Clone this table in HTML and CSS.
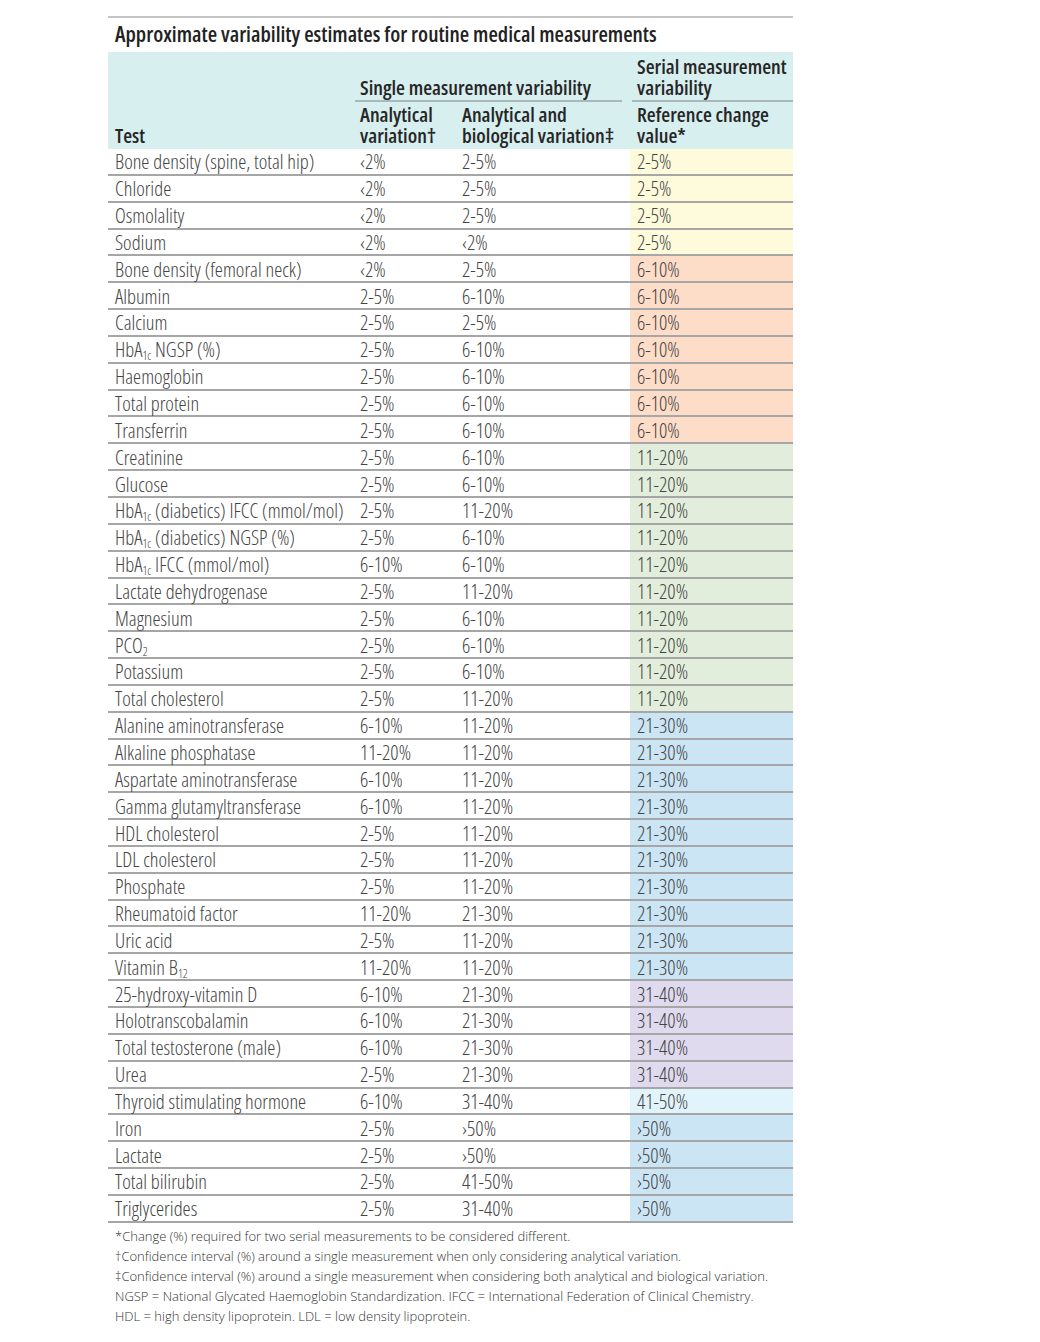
FILE: index.html
```html
<!DOCTYPE html>
<html>
<head>
<meta charset="utf-8">
<link rel="stylesheet" href="styles.css">
</head>
<body>
<div class="figure">
  <div class="title">Approximate variability estimates for routine medical measurements</div>
  <table class="vt">
    <colgroup>
      <col class="c1"><col class="c2"><col class="c3"><col class="c4">
    </colgroup>
    <thead>
      <tr class="h1">
        <th></th>
        <th colspan="2" class="grp"><div class="uline">Single measurement variability</div></th>
        <th class="grp4"><div class="uline">Serial measurement variability</div></th>
      </tr>
      <tr class="h2">
        <th class="t1">Test</th>
        <th>Analytical variation†</th>
        <th>Analytical and biological variation‡</th>
        <th class="t4">Reference change value*</th>
      </tr>
    </thead>
    <tbody>
      <tr><td>Bone density (spine, total hip)</td><td>‹2%</td><td>2-5%</td><td class="y">2-5%</td></tr>
      <tr><td>Chloride</td><td>‹2%</td><td>2-5%</td><td class="y">2-5%</td></tr>
      <tr><td>Osmolality</td><td>‹2%</td><td>2-5%</td><td class="y">2-5%</td></tr>
      <tr><td>Sodium</td><td>‹2%</td><td>‹2%</td><td class="y">2-5%</td></tr>
      <tr><td>Bone density (femoral neck)</td><td>‹2%</td><td>2-5%</td><td class="o">6-10%</td></tr>
      <tr><td>Albumin</td><td>2-5%</td><td>6-10%</td><td class="o">6-10%</td></tr>
      <tr><td>Calcium</td><td>2-5%</td><td>2-5%</td><td class="o">6-10%</td></tr>
      <tr><td>HbA<sub>1c</sub> NGSP (%)</td><td>2-5%</td><td>6-10%</td><td class="o">6-10%</td></tr>
      <tr><td>Haemoglobin</td><td>2-5%</td><td>6-10%</td><td class="o">6-10%</td></tr>
      <tr><td>Total protein</td><td>2-5%</td><td>6-10%</td><td class="o">6-10%</td></tr>
      <tr><td>Transferrin</td><td>2-5%</td><td>6-10%</td><td class="o">6-10%</td></tr>
      <tr><td>Creatinine</td><td>2-5%</td><td>6-10%</td><td class="g">11-20%</td></tr>
      <tr><td>Glucose</td><td>2-5%</td><td>6-10%</td><td class="g">11-20%</td></tr>
      <tr><td>HbA<sub>1c</sub> (diabetics) IFCC (mmol/mol)</td><td>2-5%</td><td>11-20%</td><td class="g">11-20%</td></tr>
      <tr><td>HbA<sub>1c</sub> (diabetics) NGSP (%)</td><td>2-5%</td><td>6-10%</td><td class="g">11-20%</td></tr>
      <tr><td>HbA<sub>1c</sub> IFCC (mmol/mol)</td><td>6-10%</td><td>6-10%</td><td class="g">11-20%</td></tr>
      <tr><td>Lactate dehydrogenase</td><td>2-5%</td><td>11-20%</td><td class="g">11-20%</td></tr>
      <tr><td>Magnesium</td><td>2-5%</td><td>6-10%</td><td class="g">11-20%</td></tr>
      <tr><td>PCO<sub>2</sub></td><td>2-5%</td><td>6-10%</td><td class="g">11-20%</td></tr>
      <tr><td>Potassium</td><td>2-5%</td><td>6-10%</td><td class="g">11-20%</td></tr>
      <tr><td>Total cholesterol</td><td>2-5%</td><td>11-20%</td><td class="g">11-20%</td></tr>
      <tr><td>Alanine aminotransferase</td><td>6-10%</td><td>11-20%</td><td class="b">21-30%</td></tr>
      <tr><td>Alkaline phosphatase</td><td>11-20%</td><td>11-20%</td><td class="b">21-30%</td></tr>
      <tr><td>Aspartate aminotransferase</td><td>6-10%</td><td>11-20%</td><td class="b">21-30%</td></tr>
      <tr><td>Gamma glutamyltransferase</td><td>6-10%</td><td>11-20%</td><td class="b">21-30%</td></tr>
      <tr><td>HDL cholesterol</td><td>2-5%</td><td>11-20%</td><td class="b">21-30%</td></tr>
      <tr><td>LDL cholesterol</td><td>2-5%</td><td>11-20%</td><td class="b">21-30%</td></tr>
      <tr><td>Phosphate</td><td>2-5%</td><td>11-20%</td><td class="b">21-30%</td></tr>
      <tr><td>Rheumatoid factor</td><td>11-20%</td><td>21-30%</td><td class="b">21-30%</td></tr>
      <tr><td>Uric acid</td><td>2-5%</td><td>11-20%</td><td class="b">21-30%</td></tr>
      <tr><td>Vitamin B<sub>12</sub></td><td>11-20%</td><td>11-20%</td><td class="b">21-30%</td></tr>
      <tr><td>25-hydroxy-vitamin D</td><td>6-10%</td><td>21-30%</td><td class="p">31-40%</td></tr>
      <tr><td>Holotranscobalamin</td><td>6-10%</td><td>21-30%</td><td class="p">31-40%</td></tr>
      <tr><td>Total testosterone (male)</td><td>6-10%</td><td>21-30%</td><td class="p">31-40%</td></tr>
      <tr><td>Urea</td><td>2-5%</td><td>21-30%</td><td class="p">31-40%</td></tr>
      <tr><td>Thyroid stimulating hormone</td><td>6-10%</td><td>31-40%</td><td class="lb">41-50%</td></tr>
      <tr><td>Iron</td><td>2-5%</td><td>›50%</td><td class="b">›50%</td></tr>
      <tr><td>Lactate</td><td>2-5%</td><td>›50%</td><td class="b">›50%</td></tr>
      <tr><td>Total bilirubin</td><td>2-5%</td><td>41-50%</td><td class="b">›50%</td></tr>
      <tr><td>Triglycerides</td><td>2-5%</td><td>31-40%</td><td class="b">›50%</td></tr>
    </tbody>
  </table>
  <div class="notes">
    <p>*Change (%) required for two serial measurements to be considered different.</p>
    <p>†Confidence interval (%) around a single measurement when only considering analytical variation.</p>
    <p>‡Confidence interval (%) around a single measurement when considering both analytical and biological variation.</p>
    <p>NGSP = National Glycated Haemoglobin Standardization. IFCC = International Federation of Clinical Chemistry.</p>
    <p>HDL = high density lipoprotein. LDL = low density lipoprotein.</p>
  </div>
</div>
</body>
</html>
```

FILE: styles.css
```css
html, body {
  margin: 0;
  padding: 0;
  background: #ffffff;
}
body {
  font-family: "Open Sans", "DejaVu Sans Condensed", sans-serif;
  font-stretch: 75%;
  color: #444444;
}
.figure {
  width: 685px;
  margin-left: 108px;
  padding-top: 16px;
}
.title {
  border-top: 2px solid #c4c4c4;
  padding: 4px 0 0 7px;
  height: 30px;
  font-size: 21.6px;
  font-weight: 600;
  color: #222;
  line-height: 24px;
}
.vt {
  width: 685px;
  table-layout: fixed;
  border-collapse: separate;
  border-spacing: 0;
  font-size: 20.4px;
  font-weight: 300;
}
.c1 { width: 247px; }
.c2 { width: 102px; }
.c3 { width: 173px; }
.c4 { width: 163px; }
thead th {
  background: #d8efef;
  text-align: left;
  font-weight: 600;
  color: #262626;
  line-height: 21px;
  vertical-align: bottom;
  padding: 0 0 0 5px;
}
.h1 th {
  padding-top: 4px;
  padding-bottom: 0;
}
.h1 th.grp {
  padding-left: 0;
  padding-right: 8px;
}
.h1 th.grp4 {
  padding-left: 2px;
}
.uline {
  border-bottom: 2px solid #a9b9b9;
  padding: 0 0 2px 5px;
}
.grp4 .uline {
  padding-left: 5px;
}
.h2 th {
  padding-top: 2px;
  padding-bottom: 3px;
}
.h2 th.t1 { padding-left: 7px; }
.h2 th.t4 { padding-left: 7px; }
tbody td {
  height: 24.85px;
  padding: 0 0 0 5px;
  border-bottom: 2px solid #a6a6a6;
  line-height: 24px;
  white-space: nowrap;
  vertical-align: middle;
}
tbody td:first-child { padding-left: 7px; }
tbody td:last-child { padding-left: 7px; }
sub {
  font-size: 12px;
  line-height: 0;
  vertical-align: -3px;
}
.y { background: #fdfbdc; }
.o { background: #fddcc8; }
.g { background: #e2eedb; }
.b { background: #cbe5f4; }
.p { background: #dfdaee; }
.lb { background: #e2f4fb; }
.notes {
  padding: 3px 0 0 7px;
  font-size: 13px;
  font-stretch: 100%;
  letter-spacing: 0;
  font-weight: 300;
  line-height: 20px;
  color: #333;
}
.notes p {
  margin: 0;
}
```
